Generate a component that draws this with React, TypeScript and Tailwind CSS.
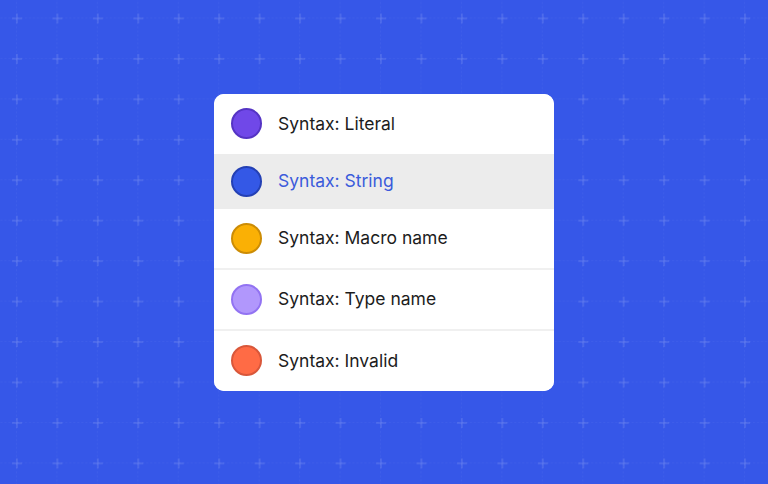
import React from 'react';

type Item = {
  label: string;
  fill: string;
  active?: boolean;
  height: string;
  divider?: boolean;
};

const items: Item[] = [
  { label: 'Syntax: Literal', fill: 'bg-[#7048e8] border-[#5534c4]', height: 'h-[60px]' },
  { label: 'Syntax: String', fill: 'bg-[#3458e6] border-[#2440b4]', height: 'h-[55px]', active: true },
  { label: 'Syntax: Macro name', fill: 'bg-[#fab005] border-[#cc8c05]', height: 'h-[59px]' },
  { label: 'Syntax: Type name', fill: 'bg-[#b197fc] border-[#9273f2]', height: 'h-[61px]', divider: true },
  { label: 'Syntax: Invalid', fill: 'bg-[#ff6b45] border-[#d9573a]', height: 'h-[62px]', divider: true },
];

function GridBackdrop() {
  return (
    <svg className="absolute inset-0 h-full w-full" aria-hidden>
      <defs>
        <pattern id="grid" x="-23.5" y="-22" width="40.45" height="40.45" patternUnits="userSpaceOnUse">
          <path d="M40.45 0V40.45M0 40.45H40.45" stroke="#ffffff" strokeOpacity="0.07" strokeWidth="1" strokeDasharray="2 2" />
          <path d="M35.45 40.45H45.45M40.45 35.45V45.45M-5 0H5M0 -5V5M35.45 0H45.45M40.45 -5V5M-5 40.45H5M0 35.45V45.45" stroke="#ffffff" strokeOpacity="0.2" strokeWidth="1" />
        </pattern>
      </defs>
      <rect width="100%" height="100%" fill="url(#grid)" />
    </svg>
  );
}

export default function App() {
  return (
    <div className="relative flex h-[484px] w-[768px] items-center justify-center overflow-hidden bg-[#3657e8] font-['Inter',sans-serif]">
      <GridBackdrop />
      <div className="relative flex w-[340px] flex-col overflow-hidden rounded-[10px] bg-white">
        {items.map((item) => (
          <div
            key={item.label}
            className={`flex items-center gap-[16px] pl-[17px] ${item.height} ${
              item.active ? 'bg-[#ececec]' : 'bg-white'
            } ${item.divider ? 'border-t-2 border-[#f0f0f0]' : ''}`}
          >
            <span className={`h-[31px] w-[31px] shrink-0 rounded-full border-2 ${item.fill}`} />
            <span
              className={`text-[17.5px] leading-none ${
                item.active ? 'text-[#3b5bdb]' : 'text-[#1c1c1c]'
              }`}
            >
              {item.label}
            </span>
          </div>
        ))}
      </div>
    </div>
  );
}
